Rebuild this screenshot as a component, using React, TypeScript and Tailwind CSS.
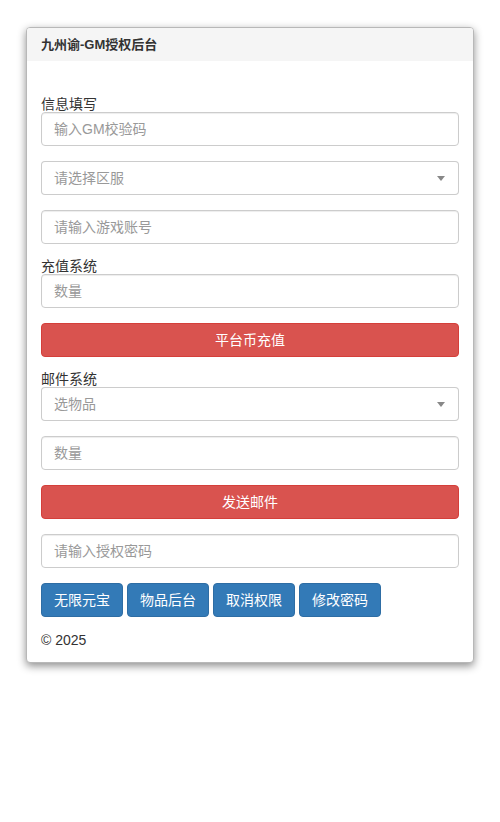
const font = "font-['Helvetica_Neue','Liberation_Sans','Noto_Sans_CJK_SC',sans-serif]";

function Input({ placeholder }: { placeholder: string }) {
  return (
    <input
      className="w-full h-[34px] rounded-[4px] border border-[#ccc] bg-white px-3 text-[14px] text-[#555] placeholder:text-[#999] outline-none shadow-[inset_0_1px_1px_rgba(0,0,0,0.075)]"
      placeholder={placeholder}
    />
  );
}

function Select({ placeholder }: { placeholder: string }) {
  return (
    <div className="w-full h-[34px] rounded-[4px] border border-[#aaa]/60 bg-white pl-3 pr-[13px] flex items-center justify-between text-[14px] text-[#999]">
      <span>{placeholder}</span>
      <span className="w-0 h-0 border-x-[4px] border-x-transparent border-t-[5px] border-t-[#888]" />
    </div>
  );
}

function Label({ children }: { children: string }) {
  return <label className="block text-[14px] leading-4 text-[#333]">{children}</label>;
}

export default function App() {
  return (
    <div className={`w-[500px] min-h-[822px] bg-white pt-[27px] px-[26px] ${font}`}>
      <div className="rounded-[4px] border border-[#b8b8b8] bg-white shadow-[0_3px_8px_rgba(0,0,0,0.45)] overflow-hidden">
        <header className="h-[33px] bg-[#f5f5f5] flex items-center px-[14px] text-[13px] font-bold text-[#333]">
          九州谕-GM授权后台
        </header>

        <div className="px-[14px] pt-[35px] pb-[12px] flex flex-col">
          <Label>信息填写</Label>
          <div className="mb-[15px]">
            <Input placeholder="输入GM校验码" />
          </div>
          <div className="mb-[15px]">
            <Select placeholder="请选择区服" />
          </div>
          <div className="mb-[14px]">
            <Input placeholder="请输入游戏账号" />
          </div>

          <Label>充值系统</Label>
          <div className="mb-[15px]">
            <Input placeholder="数量" />
          </div>
          <button className="w-full h-[34px] rounded-[4px] border border-[#d43f3a] bg-[#d9534f] text-white text-[14px] mb-[14px]">
            平台币充值
          </button>

          <Label>邮件系统</Label>
          <div className="mb-[15px]">
            <Select placeholder="选物品" />
          </div>
          <div className="mb-[15px]">
            <Input placeholder="数量" />
          </div>
          <button className="w-full h-[34px] rounded-[4px] border border-[#d43f3a] bg-[#d9534f] text-white text-[14px] mb-[15px]">
            发送邮件
          </button>

          <div className="mb-[15px]">
            <Input placeholder="请输入授权密码" />
          </div>

          <div className="flex gap-[4px]">
            {["无限元宝", "物品后台", "取消权限", "修改密码"].map((t) => (
              <button
                key={t}
                className="w-[82px] h-[34px] rounded-[4px] border border-[#2e6da4] bg-[#337ab7] text-white text-[14px]"
              >
                {t}
              </button>
            ))}
          </div>

          <p className="mt-[13px] text-[14px] leading-5 text-[#333]">© 2025</p>
        </div>
      </div>
    </div>
  );
}
